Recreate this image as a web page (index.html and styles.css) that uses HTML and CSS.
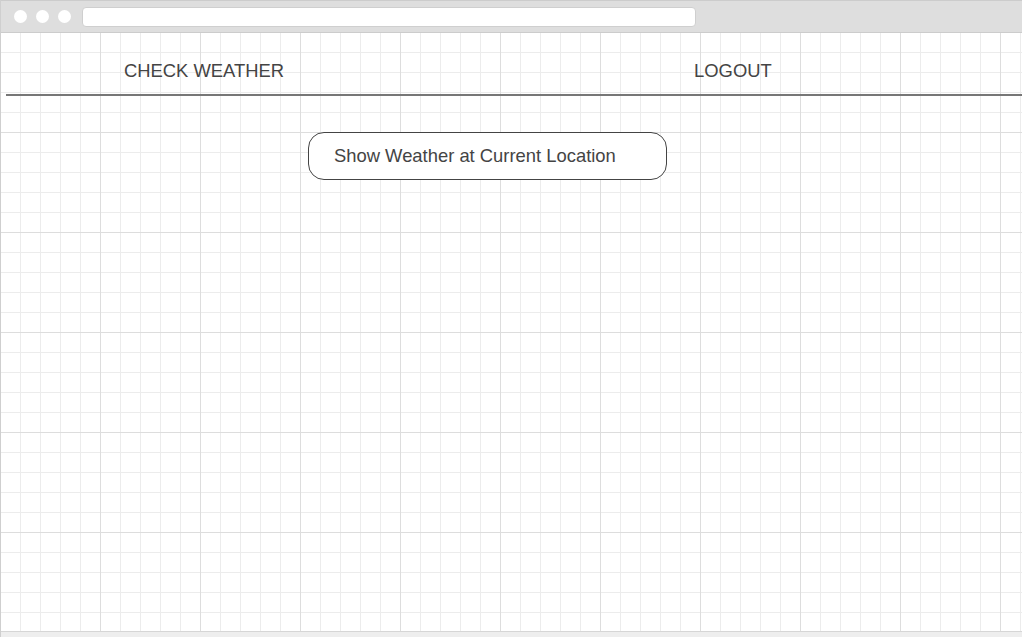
FILE: index.html
```html
<!DOCTYPE html>
<html lang="en">
<head>
<meta charset="utf-8">
<title>Check Weather</title>
<link rel="stylesheet" href="styles.css">
</head>
<body>
<div class="frame">
  <div class="chrome">
    <div class="dots">
      <span class="dot"></span>
      <span class="dot"></span>
      <span class="dot"></span>
    </div>
    <div class="urlbar"></div>
  </div>
  <div class="page">
    <nav class="nav">
      <a class="nav-link" href="#">CHECK WEATHER</a>
      <a class="nav-link nav-logout" href="#">LOGOUT</a>
    </nav>
    <main class="main">
      <button class="weather-btn" type="button">Show Weather at Current Location</button>
    </main>
  </div>
  <div class="bottom-strip"></div>
</div>
</body>
</html>
```

FILE: styles.css
```css
html, body {
  margin: 0;
  padding: 0;
  width: 1022px;
  height: 637px;
  overflow: hidden;
  background: #fff;
  font-family: "Liberation Sans", Arial, sans-serif;
}

.frame {
  display: flex;
  flex-direction: column;
  height: 637px;
  border-left: 1px solid #cfcfcf;
  box-sizing: border-box;
}

.chrome {
  height: 33px;
  flex: none;
  background: #dedede;
  border-top: 1px solid #cccccc;
  border-bottom: 1px solid #cccccc;
  box-sizing: border-box;
  display: flex;
  align-items: center;
  padding-left: 13px;
}

.dots {
  display: flex;
  gap: 9px;
}

.dot {
  width: 13px;
  height: 13px;
  border-radius: 50%;
  background: #fff;
}

.urlbar {
  margin-left: 11px;
  width: 614px;
  height: 20px;
  background: #fff;
  border: 1px solid #cfcfcf;
  border-radius: 4px;
  box-sizing: border-box;
}

.page {
  flex: 1;
  background-color: #fff;
  background-image:
    linear-gradient(to right, #dddddd 1px, transparent 1px),
    linear-gradient(to bottom, #dddddd 1px, transparent 1px),
    linear-gradient(to right, #ececec 1px, transparent 1px),
    linear-gradient(to bottom, #ececec 1px, transparent 1px);
  background-size: 100px 100px, 100px 100px, 20px 20px, 20px 20px;
  background-position: -1px -1px, -1px -1px, -1px -1px, -1px -1px;
  padding-top: 28px;
  box-sizing: border-box;
}

.nav {
  margin-left: 5px;
  display: flex;
  padding-left: 118px;
  gap: 410px;
  padding-bottom: 13px;
  border-bottom: 2px solid #777777;
}

.nav-link {
  font-size: 18.4px;
  line-height: 20px;
  color: #444444;
  text-decoration: none;
}

.main {
  padding-top: 36px;
  padding-left: 307px;
}

.weather-btn {
  width: 359px;
  height: 48px;
  border: 1px solid #444444;
  border-radius: 16px;
  background: #fff;
  font-family: "Liberation Sans", Arial, sans-serif;
  font-size: 18.4px;
  color: #444444;
  text-align: left;
  padding: 0 0 0 25px;
  cursor: pointer;
}

.bottom-strip {
  height: 5px;
  flex: none;
  background: #eeeeee;
  border-top: 1px solid #d6d6d6;
}
```
